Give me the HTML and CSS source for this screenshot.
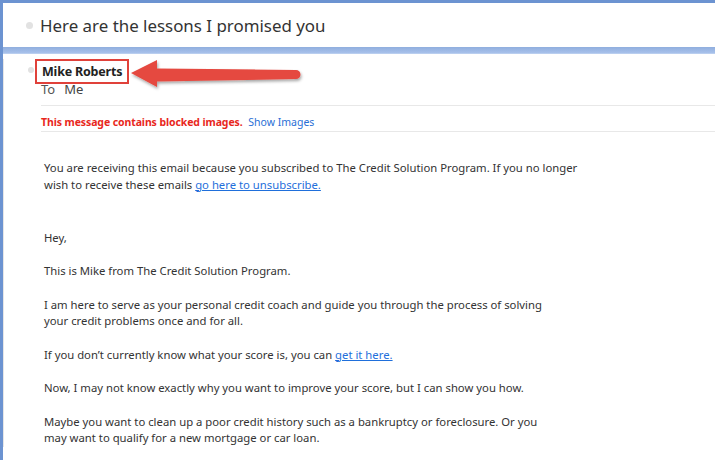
FILE: index.html
```html
<!DOCTYPE html>
<html>
<head>
<meta charset="utf-8">
<link rel="stylesheet" href="styles.css">
</head>
<body>
<div class="app">
  <div class="topbar"></div>
  <div class="header">
    <span class="dot"></span>
    <h1 class="subject">Here are the lessons I promised you</h1>
  </div>
  <div class="band"></div>
  <div class="message">
    <div class="sender-row">
      <span class="dot small"></span>
      <span class="sender">Mike Roberts</span>
    </div>
    <div class="recipients"><span class="to">To</span><span class="me">Me</span></div>
    <div class="blocked">
      <span class="blocked-text">This message contains blocked images.</span>
      <a class="show-images" href="#">Show Images</a>
    </div>
    <div class="body">
      <p class="notice">You are receiving this email because you subscribed to The Credit Solution Program. If you no longer<br>wish to receive these emails <a href="#">go here to unsubscribe.</a></p>
      <p class="hey">Hey,</p>
      <p>This is Mike from The Credit Solution Program.</p>
      <p>I am here to serve as your personal credit coach and guide you through the process of solving<br>your credit problems once and for all.</p>
      <p>If you don’t currently know what your score is, you can <a href="#">get it here.</a></p>
      <p>Now, I may not know exactly why you want to improve your score, but I can show you how.</p>
      <p>Maybe you want to clean up a poor credit history such as a bankruptcy or foreclosure. Or you<br>may want to qualify for a new mortgage or car loan.</p>
    </div>
  </div>
  <svg class="arrow" width="715" height="460" viewBox="0 0 715 460">
    <defs>
      <filter id="sh" x="-10%" y="-40%" width="120%" height="200%">
        <feDropShadow dx="1" dy="2" stdDeviation="1.5" flood-color="#000" flood-opacity="0.35"/>
      </filter>
    </defs>
    <path filter="url(#sh)" fill="#e5483f" d="M131 73 L157 60 L157 68.5 L296 70 A4.5 4.5 0 0 1 296 79 L157 81.5 L157 87 Z"/>
  </svg>
</div>
</body>
</html>
```
FILE: styles.css
```css
html, body {
  margin: 0;
  padding: 0;
  background: #fff;
}
.app {
  position: relative;
  width: 715px;
  height: 460px;
  overflow: hidden;
  box-sizing: border-box;
  border-left: 3px solid #6c93d1;
  font-family: "Noto Sans", "Open Sans", sans-serif;
  color: #333;
}
.topbar {
  height: 3px;
  background: #6c93d1;
}
.header {
  height: 44px;
  display: flex;
  align-items: center;
  padding-left: 23px;
  gap: 7px;
}
.dot {
  width: 7px;
  height: 7px;
  border-radius: 50%;
  background: #e2e2e2;
  flex: none;
}
.subject {
  margin: 0;
  font-family: "Noto Sans", "Open Sans", sans-serif;
  font-weight: 400;
  font-size: 16.9px;
  color: #333;
  margin-top: 1px;
}
.band {
  height: 7px;
  background: linear-gradient(#90aede, #a6c0ea 80%, #c4d6f2);
}
.message {
  border-left: 1px solid #e6e6e6;
  padding-left: 37px;
}
.sender-row {
  display: flex;
  align-items: center;
  margin-top: 5px;
  margin-left: -13px;
  gap: 1px;
}
.dot.small {
  width: 6px;
  height: 6px;
  margin-top: -4px;
}
.sender {
  display: inline-block;
  border: 2px solid #e0413a;
  padding: 2px 5px 2px 5px;
  font-weight: 700;
  font-size: 12.5px;
  color: #222;
  letter-spacing: -0.2px;
}
.recipients {
  font-size: 13px;
  color: #555;
  display: flex;
  gap: 9px;
  margin-top: -3px;
  line-height: 17px;
}
.recipients .me {
  color: #444;
}
.blocked {
  margin-top: 7px;
  border-top: 1px solid #e8e8e8;
  border-bottom: 1px solid #e8e8e8;
  padding: 10px 0 2px 0;
  font-size: 10.5px;
  line-height: 13px;
}
.blocked-text {
  color: #e8271d;
  font-weight: 700;
  letter-spacing: -0.1px;
}
.show-images {
  color: #2a6fd6;
  text-decoration: none;
  margin-left: 3px;
}
.body {
  padding-left: 3px;
  width: 560px;
  font-size: 11.3px;
  line-height: 16.7px;
  color: #333;
  padding-top: 28px;
}
.body p {
  margin: 0 0 16.7px 0;
}
.body p.notice {
  margin-bottom: 36.5px;
}
.body a {
  color: #1f6fdb;
  text-decoration: underline;
}
.arrow {
  position: absolute;
  left: -3px;
  top: 0;
  pointer-events: none;
}
```
